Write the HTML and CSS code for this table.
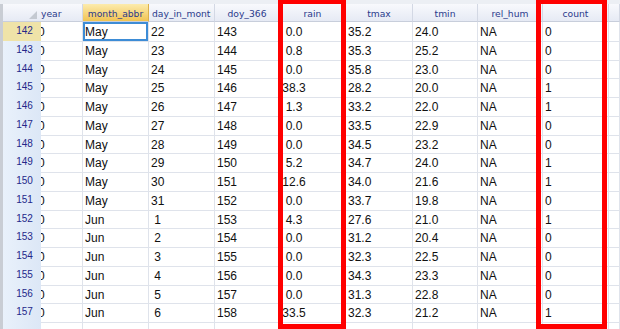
FILE: index.html
```html
<!DOCTYPE html>
<html lang="en">
<head>
  <meta charset="UTF-8">
  <title>Data Viewer</title>
  <link rel="stylesheet" href="styles.css">
</head>
<body>
  <div class="sheet">
    <div class="topbar"></div>

    <!-- column headers -->
    <div class="row head">
      <div class="hc corner"><span class="tri"></span></div>
      <div class="hc left">year</div>
      <div class="hc sel">month_abbr</div>
      <div class="hc left pad"><span>day_in_month</span></div>
      <div class="hc">doy_366</div>
      <div class="hc">rain</div>
      <div class="hc">tmax</div>
      <div class="hc">tmin</div>
      <div class="hc">rel_hum</div>
      <div class="hc">count</div>
      <div class="hc"></div>
    </div>

    <!-- data rows -->
    <div class="row"><div class="rh cur">142</div><div class="yr"><span>0</span></div><div class="cell active">May</div><div class="cell day">22</div><div class="cell">143</div><div class="cell rain">0.0</div><div class="cell">35.2</div><div class="cell">24.0</div><div class="cell">NA</div><div class="cell">0</div><div class="cell"></div></div>
    <div class="row"><div class="rh">143</div><div class="yr"><span>0</span></div><div class="cell">May</div><div class="cell day">23</div><div class="cell">144</div><div class="cell rain">0.8</div><div class="cell">35.3</div><div class="cell">25.2</div><div class="cell">NA</div><div class="cell">0</div><div class="cell"></div></div>
    <div class="row"><div class="rh">144</div><div class="yr"><span>0</span></div><div class="cell">May</div><div class="cell day">24</div><div class="cell">145</div><div class="cell rain">0.0</div><div class="cell">35.8</div><div class="cell">23.0</div><div class="cell">NA</div><div class="cell">0</div><div class="cell"></div></div>
    <div class="row"><div class="rh">145</div><div class="yr"><span>0</span></div><div class="cell">May</div><div class="cell day">25</div><div class="cell">146</div><div class="cell rain">38.3</div><div class="cell">28.2</div><div class="cell">20.0</div><div class="cell">NA</div><div class="cell">1</div><div class="cell"></div></div>
    <div class="row"><div class="rh">146</div><div class="yr"><span>0</span></div><div class="cell">May</div><div class="cell day">26</div><div class="cell">147</div><div class="cell rain">1.3</div><div class="cell">33.2</div><div class="cell">22.0</div><div class="cell">NA</div><div class="cell">1</div><div class="cell"></div></div>
    <div class="row"><div class="rh">147</div><div class="yr"><span>0</span></div><div class="cell">May</div><div class="cell day">27</div><div class="cell">148</div><div class="cell rain">0.0</div><div class="cell">33.5</div><div class="cell">22.9</div><div class="cell">NA</div><div class="cell">0</div><div class="cell"></div></div>
    <div class="row"><div class="rh">148</div><div class="yr"><span>0</span></div><div class="cell">May</div><div class="cell day">28</div><div class="cell">149</div><div class="cell rain">0.0</div><div class="cell">34.5</div><div class="cell">23.2</div><div class="cell">NA</div><div class="cell">0</div><div class="cell"></div></div>
    <div class="row"><div class="rh">149</div><div class="yr"><span>0</span></div><div class="cell">May</div><div class="cell day">29</div><div class="cell">150</div><div class="cell rain">5.2</div><div class="cell">34.7</div><div class="cell">24.0</div><div class="cell">NA</div><div class="cell">1</div><div class="cell"></div></div>
    <div class="row"><div class="rh">150</div><div class="yr"><span>0</span></div><div class="cell">May</div><div class="cell day">30</div><div class="cell">151</div><div class="cell rain">12.6</div><div class="cell">34.0</div><div class="cell">21.6</div><div class="cell">NA</div><div class="cell">1</div><div class="cell"></div></div>
    <div class="row"><div class="rh">151</div><div class="yr"><span>0</span></div><div class="cell">May</div><div class="cell day">31</div><div class="cell">152</div><div class="cell rain">0.0</div><div class="cell">33.7</div><div class="cell">19.8</div><div class="cell">NA</div><div class="cell">0</div><div class="cell"></div></div>
    <div class="row"><div class="rh">152</div><div class="yr"><span>0</span></div><div class="cell">Jun</div><div class="cell day">1</div><div class="cell">153</div><div class="cell rain">4.3</div><div class="cell">27.6</div><div class="cell">21.0</div><div class="cell">NA</div><div class="cell">1</div><div class="cell"></div></div>
    <div class="row"><div class="rh">153</div><div class="yr"><span>0</span></div><div class="cell">Jun</div><div class="cell day">2</div><div class="cell">154</div><div class="cell rain">0.0</div><div class="cell">31.2</div><div class="cell">20.4</div><div class="cell">NA</div><div class="cell">0</div><div class="cell"></div></div>
    <div class="row"><div class="rh">154</div><div class="yr"><span>0</span></div><div class="cell">Jun</div><div class="cell day">3</div><div class="cell">155</div><div class="cell rain">0.0</div><div class="cell">32.3</div><div class="cell">22.5</div><div class="cell">NA</div><div class="cell">0</div><div class="cell"></div></div>
    <div class="row"><div class="rh">155</div><div class="yr"><span>0</span></div><div class="cell">Jun</div><div class="cell day">4</div><div class="cell">156</div><div class="cell rain">0.0</div><div class="cell">34.3</div><div class="cell">23.3</div><div class="cell">NA</div><div class="cell">0</div><div class="cell"></div></div>
    <div class="row"><div class="rh">156</div><div class="yr"><span>0</span></div><div class="cell">Jun</div><div class="cell day">5</div><div class="cell">157</div><div class="cell rain">0.0</div><div class="cell">31.3</div><div class="cell">22.8</div><div class="cell">NA</div><div class="cell">0</div><div class="cell"></div></div>
    <div class="row"><div class="rh">157</div><div class="yr"><span>0</span></div><div class="cell">Jun</div><div class="cell day">6</div><div class="cell">158</div><div class="cell rain">33.5</div><div class="cell">32.3</div><div class="cell">21.2</div><div class="cell">NA</div><div class="cell">1</div><div class="cell"></div></div>
    <!-- next row, scrolled just out of view -->
    <div class="row"><div class="rh"></div><div class="yr"></div><div class="cell"></div><div class="cell"></div><div class="cell"></div><div class="cell"></div><div class="cell"></div><div class="cell"></div><div class="cell"></div><div class="cell"></div><div class="cell"></div></div>

    <!-- highlight boxes -->
    <div class="mark mark-rain"></div>
    <div class="mark mark-count"></div>
  </div>
</body>
</html>
```

FILE: styles.css
```css
* {
  margin: 0;
  padding: 0;
  box-sizing: border-box;
}
body {
  background: #fff;
  font-family: "Liberation Sans", Arial, sans-serif;
}
.sheet {
  position: relative;
  width: 620px;
  height: 329px;
  overflow: hidden;
  background: #fff;
}
.topbar {
  height: 4px;
  background: #eceff4;
}
.row {
  display: grid;
  grid-template-columns: 41px 42px 66px 66px 65px 66px 67px 65px 65px 66px 1fr;
  height: 18.75px;
}
.row.head {
  height: 18px;
}

/* header cells */
.hc {
  font-family: "DejaVu Sans", Tahoma, sans-serif;
  font-size: 9.2px;
  color: #2a3a8c;
  text-align: center;
  line-height: 17px;
  padding-top: 1px;
  white-space: nowrap;
  overflow: hidden;
  background: linear-gradient(#f8f9fd, #e6eaf4);
  border-right: 1px solid #d3d8e4;
  border-bottom: 1px solid #c8cedb;
}
.hc.left {
  text-align: left;
}
.hc.pad {
  padding-left: 3px;
}
.hc.pad span {
  display: block;
  width: 59px;
  overflow: hidden;
}
.hc.sel {
  background: linear-gradient(#fcebad, #f1c453);
  border-right-color: #dcb04a;
}
.corner {
  position: relative;
  border-left: 3px solid #c9cdd4;
  border-right: none;
}
.tri {
  position: absolute;
  right: 4px;
  bottom: 2px;
  width: 0;
  height: 0;
  border-left: 8px solid transparent;
  border-bottom: 8px solid #c4c9d1;
}

/* row headers */
.rh {
  font-size: 10px;
  color: #24288a;
  text-align: center;
  line-height: 18.75px;
  padding-left: 5px;
  background: linear-gradient(to right, #e9f1fb, #dce7f6);
  border-left: 3px solid #c9cdd4;
  border-bottom: 1px solid #f3f7fd;
}
.rh.cur {
  background: #efe3a8;
}

/* data cells */
.cell,
.yr {
  font-size: 12px;
  color: #111;
  line-height: 16.75px;
  padding: 2px 0 0 2px;
  white-space: nowrap;
  overflow: hidden;
  border-right: 1px solid #dfe3eb;
  border-bottom: 1px solid #dfe3eb;
}
.yr {
  padding-left: 0;
}
.yr span {
  display: inline-block;
  margin-left: -3px;
}
.cell.day {
  text-align: center;
  padding-right: 50px;
}
.cell.rain {
  text-align: center;
  padding-left: 1px;
  padding-right: 38px;
}
.cell.active {
  box-shadow: inset 0 0 0 2px #3d8cd6;
}

/* red annotation boxes */
.mark {
  position: absolute;
  top: 0;
  height: 329px;
  border: 5px solid #f00;
  border-top-width: 4px;
}
.mark-rain {
  left: 278px;
  width: 68px;
}
.mark-count {
  left: 536px;
  width: 71px;
}
```
